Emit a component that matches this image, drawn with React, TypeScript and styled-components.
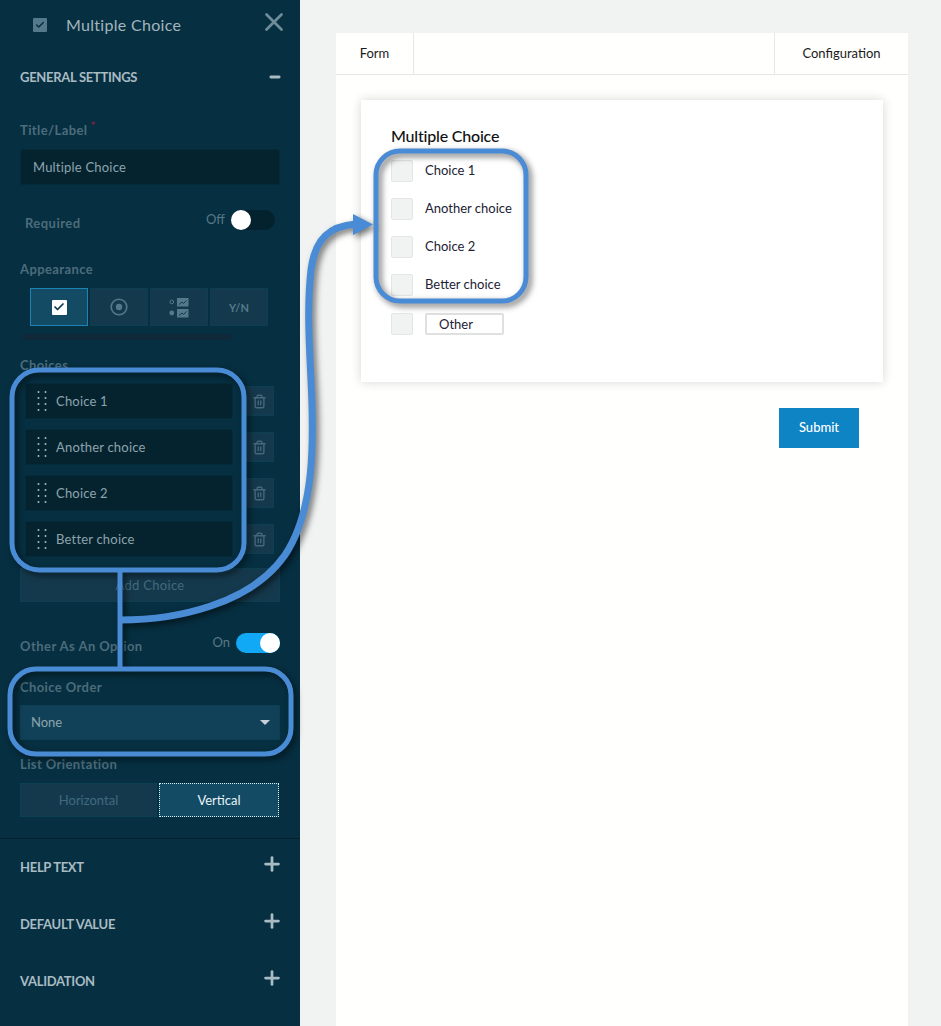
import React from 'react';
import styled, { createGlobalStyle } from 'styled-components';
import { Check, X, Plus, Minus, Trash2 } from 'lucide-react';

const GlobalStyle = createGlobalStyle`
  html, body {
    margin: 0;
    padding: 0;
    height: 100%;
    overflow: hidden;
    background: #f1f3f2;
    font-family: Lato, "Open Sans", sans-serif;
  }
  * {
    box-sizing: border-box;
  }
`;

const Shell = styled.div`
  position: relative;
  display: flex;
  width: 941px;
  height: 1026px;
  overflow: hidden;
`;

const Sidebar = styled.aside`
  width: 300px;
  flex: none;
  display: flex;
  flex-direction: column;
  background: #062f41;
`;

const Header = styled.div`
  height: 50px;
  display: flex;
  align-items: center;
  padding: 0 11px 0 33px;
`;

const HeaderIcon = styled.span`
  width: 14px;
  height: 14px;
  display: flex;
  align-items: center;
  justify-content: center;
  background: #54798a;
  border-radius: 1px;
  color: #062f41;
`;

const HeaderTitle = styled.span`
  margin: -2px 0 0 19px;
  flex: 1;
  font-size: 16px;
  color: #a3b5bd;
  letter-spacing: 0.3px;
`;

const CloseIcon = styled(X)`
  color: #6f8c99;
  margin-top: -7px;
`;

const SectionRow = styled.div`
  height: 54px;
  display: flex;
  align-items: center;
  justify-content: space-between;
  padding: 0 18px 0 20px;
`;

const SectionTitle = styled.span`
  margin-top: -1px;
  font-size: 13px;
  font-weight: 700;
  color: #a9bbc3;
  text-transform: uppercase;
  letter-spacing: -0.3px;
`;

const Fields = styled.div`
  padding: 18px 20px 0;
  display: flex;
  flex-direction: column;
`;

const FieldLabel = styled.label<{ $top?: number; $bottom?: number }>`
  display: block;
  height: 16px;
  line-height: 16px;
  font-size: 13px;
  font-weight: 700;
  color: #4c6c7b;
  letter-spacing: 0.4px;
  margin-top: ${p => p.$top ?? 0}px;
  margin-bottom: ${p => p.$bottom ?? 11}px;
`;

const Required = styled.sup`
  color: #8e1b3c;
  font-size: 11px;
  line-height: 0;
  margin-left: 3px;
`;

const TextBox = styled.div`
  height: 36px;
  display: flex;
  align-items: center;
  padding: 0 0 1px 12px;
  background: #04232f;
  border: 1px solid #052a38;
  border-radius: 2px;
  font-size: 13px;
  letter-spacing: 0.2px;
  color: #8ea4ad;
`;

const ToggleRow = styled.div<{ $top: number; $left: number }>`
  height: 20px;
  display: flex;
  align-items: flex-start;
  margin-top: ${p => p.$top}px;
  padding-left: ${p => p.$left}px;
`;

const ToggleLabel = styled.span`
  flex: 1;
  padding-top: 5px;
  font-size: 13px;
  font-weight: 700;
  line-height: 16px;
  color: #4c6c7b;
  letter-spacing: 0.45px;
`;

const ToggleState = styled.span`
  font-size: 13px;
  line-height: 16px;
  margin-right: 6px;
  margin-top: 1px;
  color: #587885;
`;

const Toggle = styled.span<{ $on?: boolean }>`
  width: 44px;
  height: 20px;
  display: flex;
  justify-content: ${p => (p.$on ? 'flex-end' : 'flex-start')};
  border-radius: 10px;
  margin-right: ${p => (p.$on ? 0 : 5)}px;
  background: ${p => (p.$on ? '#11a8f5' : '#04222e')};
`;

const Knob = styled.span`
  width: 20px;
  height: 20px;
  border-radius: 50%;
  background: #ffffff;
`;

const Tiles = styled.div`
  display: flex;
  gap: 2px;
  margin-left: 10px;
`;

const Tile = styled.div<{ $active?: boolean }>`
  width: 58px;
  height: 38px;
  display: flex;
  align-items: center;
  justify-content: center;
  background: ${p => (p.$active ? '#124b63' : '#15394c')};
  border: 1px solid ${p => (p.$active ? '#1b83b5' : '#0d3f53')};
  font-size: 11px;
  font-weight: 700;
  color: #54798a;
`;

const WhiteCheck = styled.span`
  width: 15px;
  height: 15px;
  display: flex;
  align-items: center;
  justify-content: center;
  background: #ffffff;
  border-radius: 1px;
  color: #0c3a50;
`;

const ScrollTrack = styled.div`
  width: 209px;
  height: 6px;
  margin: 8px 0 0 2px;
  border-radius: 3px;
  background: #10293a;
`;

const ChoiceList = styled.div`
  display: flex;
  flex-direction: column;
  gap: 10px;
`;

const ChoiceRow = styled.div`
  display: flex;
  align-items: center;
  padding-left: 5px;
`;

const ChoiceField = styled.div`
  width: 208px;
  height: 36px;
  display: flex;
  align-items: center;
  gap: 9px;
  padding: 0 0 1px 11px;
  background: #04232f;
  border: 1px solid #052a38;
  border-radius: 2px;
  font-size: 13px;
  letter-spacing: 0.2px;
  color: #8ea4ad;
`;

const TrashButton = styled.div`
  width: 30px;
  height: 30px;
  margin-left: 11px;
  display: flex;
  align-items: center;
  justify-content: center;
  background: #15394c;
  border: 1px solid #0d3f53;
  color: #46697a;
`;

const AddChoice = styled.div`
  height: 34px;
  margin-top: 11px;
  padding-bottom: 1px;
  display: flex;
  align-items: center;
  justify-content: center;
  background: #15394c;
  border: 1px solid #0d3f53;
  font-size: 13px;
  letter-spacing: 0.3px;
  color: #41697c;
`;

const SelectBox = styled.div`
  height: 35px;
  display: flex;
  align-items: center;
  justify-content: space-between;
  padding: 0 7px 1px 10px;
  background: #114158;
  border: 1px solid #0d3f53;
  font-size: 13px;
  color: #8ea4ad;
`;

const Caret = styled.span`
  width: 0;
  height: 0;
  border-left: 5px solid transparent;
  border-right: 5px solid transparent;
  border-top: 5px solid #c6d2d7;
  margin-right: 2px;
`;

const Segments = styled.div`
  display: flex;
  gap: 2px;
  height: 34px;
`;

const Segment = styled.div<{ $active?: boolean }>`
  flex: ${p => (p.$active ? '0 0 120px' : '0 0 137px')};
  display: flex;
  align-items: center;
  justify-content: center;
  padding-bottom: 1px;
  font-size: 13px;
  background: ${p => (p.$active ? '#124b63' : '#15394c')};
  border: 1px ${p => (p.$active ? 'dotted #d6eef8' : 'solid #0d3f53')};
  color: ${p => (p.$active ? '#e8f3f8' : '#3f6a80')};
`;

const Divider = styled.hr`
  width: 100%;
  height: 1px;
  margin: 21px 0 0;
  border: none;
  background: #04202c;
`;

const AccordionRow = styled.div`
  height: 57px;
  display: flex;
  align-items: center;
  justify-content: space-between;
  padding: 0 17px 0 20px;
`;

const AccordionIcon = styled(Plus)`
  color: #a9bbc3;
  margin-top: -8px;
`;

const Main = styled.main`
  flex: 1;
  padding: 33px 33px 0 36px;
`;

const Panel = styled.div`
  height: 100%;
  background: #fffffe;
  display: flex;
  flex-direction: column;
`;

const Tabs = styled.div`
  height: 42px;
  flex: none;
  display: flex;
  justify-content: space-between;
  border-bottom: 1px solid #e6e8e7;
`;

const Tab = styled.div<{ $width: number; $side: 'left' | 'right' }>`
  width: ${p => p.$width}px;
  display: flex;
  align-items: center;
  justify-content: center;
  padding-bottom: 1px;
  font-size: 13px;
  color: #1a1a1a;
  border-${p => p.$side}: 1px solid #e6e8e7;
`;

const FormArea = styled.div`
  padding: 25px;
`;

const FormCard = styled.section`
  height: 282px;
  padding: 26px 30px 0;
  background: #ffffff;
  box-shadow: 0 0 10px rgba(0, 0, 0, 0.16);
`;

const FormTitle = styled.h2`
  margin: 0 0 15px;
  font-size: 16px;
  line-height: 19px;
  font-weight: 500;
  letter-spacing: -0.2px;
  color: #111111;
`;

const OptionList = styled.div`
  display: flex;
  flex-direction: column;
  gap: 16px;
`;

const Option = styled.div`
  height: 22px;
  display: flex;
  align-items: center;
  gap: 12px;
  font-size: 13px;
  color: #222233;

  &:last-child {
    margin-top: 1px;
  }
`;

const OptionLabel = styled.span`
  margin-top: -2px;
`;

const OptionBox = styled.span`
  width: 22px;
  height: 22px;
  background: #f1f3f2;
  border: 1px solid #e4e6e5;
  border-radius: 2px;
`;

const OtherInput = styled.span`
  width: 79px;
  height: 22px;
  display: flex;
  align-items: center;
  padding-left: 12px;
  background: #ffffff;
  border: 2px solid #dfe1e0;
  border-radius: 2px;
`;

const Actions = styled.div`
  display: flex;
  justify-content: flex-end;
  margin: 26px 24px 0 0;
`;

const SubmitButton = styled.button`
  width: 80px;
  height: 40px;
  padding: 0 0 2px;
  border: none;
  background: #0f84c5;
  color: #ffffff;
  font-family: inherit;
  font-size: 13px;
  font-weight: 500;
`;

const Annotations = styled.svg`
  position: absolute;
  left: 0;
  top: 0;
  pointer-events: none;
  filter: drop-shadow(3px 3px 3px rgba(0, 0, 0, 0.55));
`;

const DragDots = () => (
  <svg width="10" height="20" viewBox="0 0 10 20" fill="#a7b8bf">
    {[1, 7, 13, 19].map(y =>
      [1.5, 8.5].map(x => <circle key={`${x}-${y}`} cx={x} cy={y} r="1" />)
    )}
  </svg>
);

const RadioGlyph = () => (
  <svg width="18" height="18" viewBox="0 0 18 18" fill="none" stroke="#54798a">
    <circle cx="9" cy="9" r="7.8" strokeWidth="1.6" />
    <circle cx="9" cy="9" r="3.2" fill="#54798a" stroke="none" />
  </svg>
);

const ImageChoiceGlyph = () => (
  <svg width="20" height="21" viewBox="0 0 20 21" fill="none">
    <circle cx="2.8" cy="5" r="1.8" stroke="#54798a" />
    <circle cx="2.8" cy="16" r="2.4" fill="#54798a" />
    <rect x="8" y="1" width="11.5" height="8.5" fill="#54798a" />
    <rect x="8" y="12" width="11.5" height="8.5" fill="#54798a" />
    <path d="M10 7.5l3-2.5 1.5 1.5 3-3M10 18.5l3-2.500 1.5 1.5 3-3" stroke="#15394c" />
  </svg>
);

const choices = ['Choice 1', 'Another choice', 'Choice 2', 'Better choice'];

const App: React.FC = () => {
  return (
    <Shell>
      <GlobalStyle />
      <Sidebar>
        <Header>
          <HeaderIcon>
            <Check size={10} strokeWidth={3.5} />
          </HeaderIcon>
          <HeaderTitle>Multiple Choice</HeaderTitle>
          <CloseIcon size={30} strokeWidth={2.2} />
        </Header>
        <SectionRow>
          <SectionTitle>General Settings</SectionTitle>
          <Minus size={14} strokeWidth={5} color="#a9bbc3" />
        </SectionRow>
        <Fields>
          <FieldLabel>
            Title/Label<Required>*</Required>
          </FieldLabel>
          <TextBox>Multiple Choice</TextBox>
          <ToggleRow $top={25} $left={5}>
            <ToggleLabel>Required</ToggleLabel>
            <ToggleState>Off</ToggleState>
            <Toggle>
              <Knob />
            </Toggle>
          </ToggleRow>
          <FieldLabel $top={31}>Appearance</FieldLabel>
          <Tiles>
            <Tile $active>
              <WhiteCheck>
                <Check size={12} strokeWidth={3.5} />
              </WhiteCheck>
            </Tile>
            <Tile>
              <RadioGlyph />
            </Tile>
            <Tile>
              <ImageChoiceGlyph />
            </Tile>
            <Tile>Y/N</Tile>
          </Tiles>
          <ScrollTrack />
          <FieldLabel $top={17} $bottom={10}>
            Choices
          </FieldLabel>
          <ChoiceList>
            {choices.map(choice => (
              <ChoiceRow key={choice}>
                <ChoiceField>
                  <DragDots />
                  {choice}
                </ChoiceField>
                <TrashButton>
                  <Trash2 size={15} strokeWidth={2.2} />
                </TrashButton>
              </ChoiceRow>
            ))}
          </ChoiceList>
          <AddChoice>Add Choice</AddChoice>
          <ToggleRow $top={31} $left={0}>
            <ToggleLabel>Other As An Option</ToggleLabel>
            <ToggleState>On</ToggleState>
            <Toggle $on>
              <Knob />
            </Toggle>
          </ToggleRow>
          <FieldLabel $top={26} $bottom={10}>
            Choice Order
          </FieldLabel>
          <SelectBox>
            None
            <Caret />
          </SelectBox>
          <FieldLabel $top={16}>List Orientation</FieldLabel>
          <Segments>
            <Segment>Horizontal</Segment>
            <Segment $active>Vertical</Segment>
          </Segments>
        </Fields>
        <Divider />
        {['Help Text', 'Default Value', 'Validation'].map(title => (
          <AccordionRow key={title}>
            <SectionTitle>{title}</SectionTitle>
            <AccordionIcon size={22} strokeWidth={3} />
          </AccordionRow>
        ))}
      </Sidebar>
      <Main>
        <Panel>
          <Tabs>
            <Tab $width={78} $side="right">
              Form
            </Tab>
            <Tab $width={134} $side="left">
              Configuration
            </Tab>
          </Tabs>
          <FormArea>
            <FormCard>
              <FormTitle>Multiple Choice</FormTitle>
              <OptionList>
                {choices.map(choice => (
                  <Option key={choice}>
                    <OptionBox />
                    <OptionLabel>{choice}</OptionLabel>
                  </Option>
                ))}
                <Option>
                  <OptionBox />
                  <OtherInput>Other</OtherInput>
                </Option>
              </OptionList>
            </FormCard>
            <Actions>
              <SubmitButton>Submit</SubmitButton>
            </Actions>
          </FormArea>
        </Panel>
      </Main>
      <Annotations width="941" height="1026" viewBox="0 0 941 1026" fill="none">
        <g stroke="#4a8bd6" strokeWidth="5">
          <rect x="12" y="370" width="232" height="200" rx="27" />
          <rect x="10" y="669" width="281" height="85" rx="26" />
          <rect x="376" y="151" width="150" height="150" rx="24" />
          <path d="M120 570V669" />
          <path d="M120 620C175 620 250 605 285 555C315 510 314 440 311 380C309 340 307 305 311 270C315 238 330 226 356 224" strokeWidth="7" />
        </g>
        <path d="M353 214L373 224.500L353 235Z" fill="#4a8bd6" />
      </Annotations>
    </Shell>
  );
};

export default App;
